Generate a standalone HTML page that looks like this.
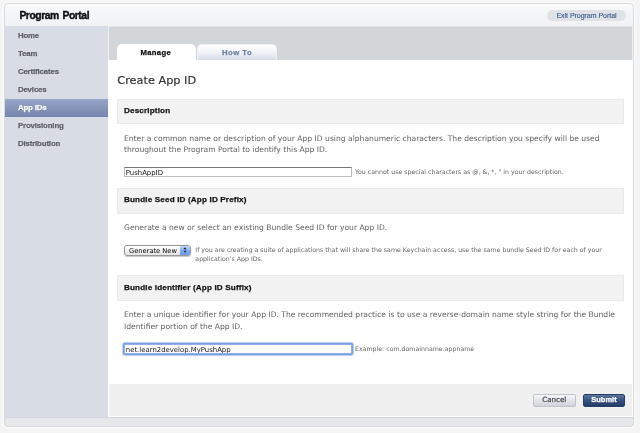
<!DOCTYPE html>
<html>
<head>
<meta charset="utf-8">
<title>Program Portal</title>
<style>
html,body{margin:0;padding:0;}
body{width:640px;height:433px;overflow:hidden;background:#f4f4f4;font-family:"DejaVu Sans","Liberation Sans",sans-serif;color:#333;position:relative;}
.abs{position:absolute;white-space:nowrap;}
.b{font-family:"Liberation Sans","DejaVu Sans",sans-serif;font-weight:bold;-webkit-text-stroke:0.25px;}
#shell{position:absolute;left:4px;top:3px;width:630px;height:424px;border-radius:4px;background:#e7e8ea;overflow:hidden;}
#shellb{position:absolute;left:4px;top:3px;width:630px;height:424px;border:1px solid #d9dadc;border-radius:4px;box-sizing:border-box;box-shadow:0 0 0 1.5px rgba(255,255,255,0.55);}
#topbar{position:absolute;left:4px;top:3px;width:630px;height:23px;background:linear-gradient(#ffffff,#f6f7f9 22%,#f3f4f6 60%,#f1f2f4);border-radius:4px 4px 0 0;}
#side{position:absolute;left:5px;top:26px;width:102.5px;height:391px;background:#d8dce5;}
#band{position:absolute;left:108.8px;top:26.8px;width:523px;height:33px;background:#d3d6d8;}
#bandbg{position:absolute;left:107.5px;top:26px;width:525.5px;height:34px;background:linear-gradient(#e2e5e8,#e2e5e8 1px,#eef0f3 1px);}
#white{position:absolute;left:107.5px;top:60px;width:525.5px;height:357px;background:#fff;}
#foot{position:absolute;left:108.8px;top:384px;width:523px;height:32px;background:#f0f0f0;}
#strip{position:absolute;left:5px;top:417px;width:628px;height:9px;background:linear-gradient(#d3d6dc,#d3d6dc 0.8px,#e5e7ea 0.8px);}
.nav{position:absolute;left:5px;width:102.5px;height:18px;line-height:18px;font-size:7.8px;letter-spacing:-0.12px;color:#5c5f68;padding-left:12.9px;box-sizing:border-box;text-shadow:0 1px 0 rgba(255,255,255,0.5);}
.nav.sel{background:linear-gradient(#97a5c7,#7585af);color:#fff;text-shadow:0 1px 0 rgba(0,0,0,0.2);}
.sec{position:absolute;left:117.2px;width:506.4px;height:25px;background:#f2f2f2;border:1px solid #ebebeb;box-sizing:border-box;}
.sec span{position:absolute;left:5.8px;top:0;line-height:22.6px;font-size:8.1px;color:#111;white-space:nowrap;letter-spacing:0.16px;}
.p{position:absolute;left:124px;font-size:7.6px;line-height:11.6px;color:#626262;white-space:nowrap;}
.hint{position:absolute;font-size:6.25px;line-height:9.6px;color:#666;white-space:nowrap;}
.inp{position:absolute;left:124px;width:227.5px;height:10.3px;border:1px solid #bcbcbc;border-top-color:#777;background:#fff;box-sizing:border-box;font-size:6.9px;line-height:11.4px;padding-left:0.8px;color:#111;white-space:nowrap;overflow:hidden;}
</style>
</head>
<body><div id="wrap" style="position:absolute;left:0;top:0;width:640px;height:433px;will-change:transform;">
<div id="shell"></div>
<div id="topbar"></div>
<div class="abs b" id="title" style="left:19.4px;top:7.2px;font-size:10.3px;letter-spacing:-0.42px;word-spacing:1.2px;-webkit-text-stroke:0.4px;line-height:17px;color:#111;">Program Portal</div>
<div class="abs" id="exit" style="left:547px;top:9.5px;width:79px;height:11.5px;border-radius:6px;background:#e1e2e5;font-family:'Liberation Sans',sans-serif;font-size:7px;letter-spacing:-0.03px;line-height:11.5px;text-align:center;color:#3a5f94;-webkit-text-stroke:0.15px;">Exit Program Portal</div>

<div id="side"></div>
<div class="nav b" style="top:27.2px;" id="n1">Home</div>
<div class="nav b" style="top:45.2px;">Team</div>
<div class="nav b" style="top:63.2px;">Certificates</div>
<div class="nav b" style="top:81.2px;">Devices</div>
<div class="nav b sel" style="top:99px;height:17.5px;line-height:18.4px" id="n5">App IDs</div>
<div class="nav b" style="top:117.2px;">Provisioning</div>
<div class="nav b" style="top:135.2px;">Distribution</div>

<div id="bandbg"></div>
<div id="band"></div>
<div id="white"></div>

<div class="abs b" id="tab1" style="left:117px;top:44px;width:79px;height:17px;background:#fff;border-radius:5px 5px 0 0;font-size:7.7px;letter-spacing:0.3px;color:#111;text-align:center;line-height:18.5px;text-indent:-1.5px;">Manage</div>
<div class="abs b" id="tab2" style="left:197px;top:44px;width:80px;height:15.8px;background:linear-gradient(#ffffff,#f3f4f8 45%,#d7dbe8);border-radius:5px 5px 0 0;font-size:7.7px;letter-spacing:0.5px;color:#6f7fa6;text-align:center;line-height:16.5px;border:1px solid #eef0f4;border-bottom:none;box-sizing:border-box;">How To</div>

<div class="abs" id="h1" style="left:117.3px;top:71.8px;font-size:11.3px;line-height:18px;color:#333;-webkit-text-stroke:0.2px;">Create App ID</div>

<div class="sec" style="top:99.3px;" id="s1"><span class="b">Description</span></div>
<div class="p" style="top:132.5px;" id="p1">Enter a common name or description of your App ID using alphanumeric characters. The description you specify will be used<br>throughout the Program Portal to identify this App ID.</div>
<div class="inp" style="top:167px;" id="i1">PushAppID</div>
<div class="hint" style="left:355px;top:166.8px;" id="hint1">You cannot use special characters as @, &amp;, *, " in your description.</div>

<div class="sec" style="top:188px;height:26px" id="s2"><span class="b">Bundle Seed ID (App ID Prefix)</span></div>
<div class="p" style="top:222px;" id="p2">Generate a new or select an existing Bundle Seed ID for your App ID.</div>
<div class="abs" id="sel" style="left:124px;top:244.6px;width:66.7px;height:11.5px;border:1px solid #999;border-radius:3px;background:linear-gradient(#ffffff,#f2f2f2 50%,#e4e4e4);box-sizing:border-box;font-size:6.7px;line-height:11.2px;color:#000;padding-left:4px;box-shadow:0 0.8px 1px rgba(0,0,0,0.22);">Generate New
  <div style="position:absolute;right:0;top:0;width:10px;height:100%;background:linear-gradient(#c4daf8,#86aff0 50%,#6397ea);border-radius:0 2px 2px 0;"></div>
  <svg style="position:absolute;right:3px;top:1.8px;" width="4" height="6" viewBox="0 0 4 6"><path d="M0.3 2.3 L2 0.3 L3.7 2.3 Z M0.3 3.7 L2 5.7 L3.7 3.7 Z" fill="#1c2330"/></svg>
</div>
<div class="hint" style="left:195.3px;top:244.6px;" id="hint2">If you are creating a suite of applications that will share the same Keychain access, use the same bundle Seed ID for each of your<br>application's App IDs.</div>

<div class="sec" style="top:275px;height:26px" id="s3"><span class="b" style="line-height:23.8px">Bundle Identifier (App ID Suffix)</span></div>
<div class="p" style="top:308.7px;" id="p3">Enter a unique identifier for your App ID. The recommended practice is to use a reverse-domain name style string for the Bundle</div>
<div class="p" style="top:320.7px;" id="p3b">Identifier portion of the App ID.</div>
<div class="inp" style="top:344px;box-shadow:0 0 0 1.2px #7aa2e3, 0 0 0.8px 1.5px rgba(122,162,227,0.4);border-color:#8db0e8;border-radius:1px;" id="i2">net.learn2develop.MyPushApp</div>
<div class="hint" style="left:355px;top:343.7px;" id="hint3">Example: com.domainname.appname</div>

<div id="foot"></div>
<div class="abs" id="cancel" style="left:533px;top:394px;width:42.5px;height:12.5px;border:1px solid #c0c3cb;border-radius:2px;background:linear-gradient(#f6f7f9,#e3e5ea 50%,#cfd3dc);box-sizing:border-box;font-size:7.1px;line-height:10.5px;text-align:center;color:#4e5157;-webkit-text-stroke:0.3px;text-shadow:0 0.7px 0 rgba(255,255,255,0.8);">Cancel</div>
<div class="abs b" id="submit" style="left:583px;top:394px;width:42px;height:12.5px;border:1px solid #263e68;border-radius:2px;background:linear-gradient(#5c759f,#38527f 50%,#213b67);box-sizing:border-box;font-size:7.5px;line-height:10.5px;text-align:center;color:#fff;">Submit</div>
<div id="strip"></div>
<div id="shellb"></div>
</div></body>
</html>
